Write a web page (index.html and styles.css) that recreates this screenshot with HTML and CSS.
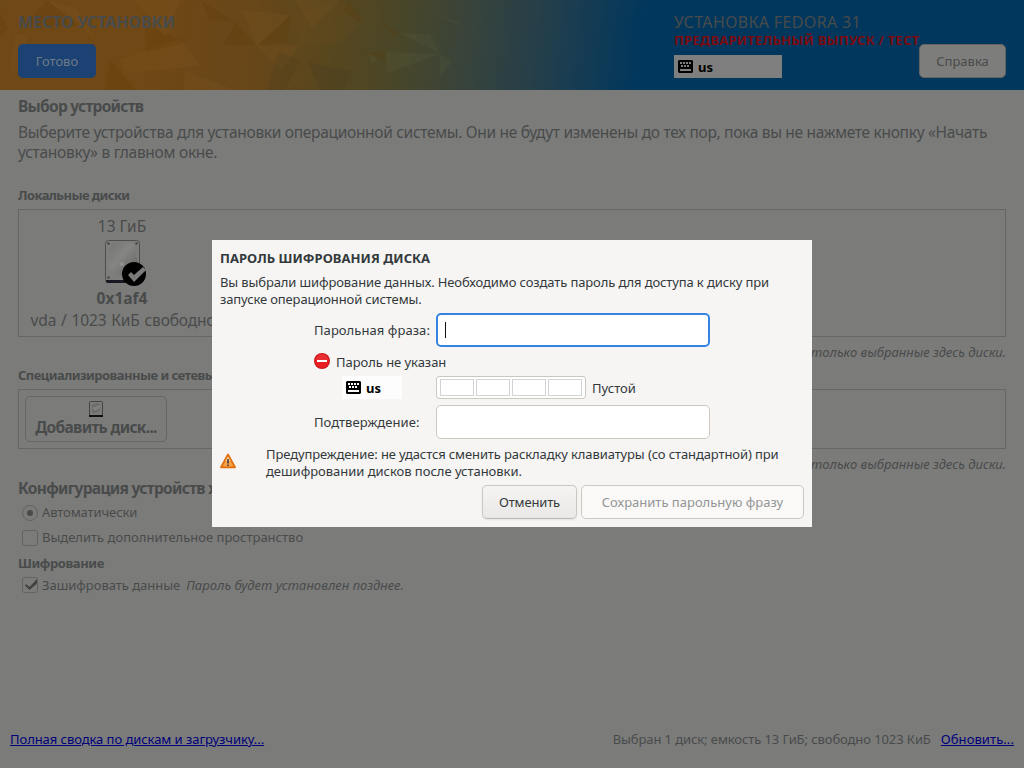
FILE: index.html
```html
<!DOCTYPE html>
<html lang="ru">
<head>
<meta charset="utf-8">
<title>Место установки</title>
<link rel="stylesheet" href="styles.css">
</head>
<body>
<svg width="0" height="0" class="defs">
  <symbol id="kbd" viewBox="0 0 15 13"><path fill="currentColor" fill-rule="evenodd" d="M1 0h13l1 1v11l-1 1H1l-1-1V1zM2 2v2h2V2zm3 0v2h2V2zm3 0v2h2V2zm3 0v2h2V2zM3 5v2h2V5zm3 0v2h2V5zm3 0v2h2V5zM2 9v2h11V9z"/></symbol>
</svg>
<div class="page">
  <header class="header">
    <svg class="header-art" width="680" height="90" viewBox="0 0 680 90">
      <g fill="#8a5f25" fill-opacity=".16">
        <path d="M242 10L291 15L257 46z"/><path d="M15 35L28 34L20 72L9 71z"/><path d="M47 0L77 8L96 40L80 25z"/>
        <path d="M185 71L235 90H184z"/><path d="M134 0H180L165 37z"/><path d="M120 60L180 38L200 66L125 73z"/><path d="M295 0H340L312 28z"/>
        <path d="M257 46L300 45L282 70z"/><path fill-opacity=".08" d="M291 15L345 0L362 22L340 44L300 45z"/>
      </g>
      <g fill="#5f6440" fill-opacity=".18">
        <path d="M400 33L430 34L440 54z"/><path d="M385 52L440 54L388 73z"/><path d="M429 10L470 28L452 22z"/><path d="M440 54L452 62L440 76z"/><path d="M368 52L378 60L372 64z"/>
      </g>
      <g fill="#5e3500" fill-opacity=".2">
        <path d="M0 14L8 29L0 37z"/><path d="M25 25L47 0L78 26z"/><path d="M257 46L291 15L287 41z"/><path d="M223 45L257 46L236 22z"/>
        <path d="M110 60L136 90H105z"/><path d="M145 26L188 42L147 52z"/><path d="M350 0L362 24L342 10z"/><path d="M380 20L400 34L393 36z"/><path d="M366 52L385 52L387 62z"/><path d="M200 0L236 22L210 20z"/>
      </g>
      <g fill="#3c3a20" fill-opacity=".16"><path d="M278 52L300 60L285 90H268z"/><path d="M308 62L352 72L345 90H320z"/></g>
    </svg>
    <div class="header-left">
      <h1 class="title bold t-title">МЕСТО УСТАНОВКИ</h1>
      <div class="btn-done"><span>Готово</span></div>
    </div>
    <div class="header-right">
      <div class="title"><span class="t-fedora">УСТАНОВКА FEDORA 31</span></div>
      <div class="prerelease"><span class="t-pre">ПРЕДВАРИТЕЛЬНЫЙ ВЫПУСК / ТЕСТ</span></div>
      <div class="layout"><svg width="15" height="13"><use href="#kbd"/></svg><span>us</span></div>
    </div>
    <div class="btn-help"><span class="t-help">Справка</span></div>
  </header>
  <main class="main">
    <h2 class="big bold h-devices"><span class="t-devices">Выбор устройств</span></h2>
    <p class="big intro"><span class="t-intro1">Выберите устройства для установки операционной системы. Они не будут изменены до тех пор, пока вы не нажмете кнопку «Начать</span><br><span class="t-intro2">установку» в главном окне.</span></p>
    <h3 class="small bold h-local"><span class="t-local">Локальные диски</span></h3>
    <section class="box disks">
      <div class="disk">
        <div class="big"><span>13 ГиБ</span></div>
        <svg class="disk-icon" width="50" height="48" viewBox="0 0 50 48">
          <defs><linearGradient id="metal" x1="0" y1="0" x2="1" y2="1"><stop offset="0" stop-color="#747472"/><stop offset=".45" stop-color="#858583"/><stop offset="1" stop-color="#60605f"/></linearGradient></defs>
          <rect x="8.500" y="1.500" width="34" height="42" rx="3" fill="#7e7e7c" stroke="#4e4e4d"/>
          <path d="M9 41h33v1q0 2-2 2H11q-2 0-2-2z" fill="#181722"/>
          <path d="M15 4q10-3 21 0q0 5 4 7q-3 4 0 8q2 10-4 15l-9 3q-13-1-16-12q-1-6 2-10q-3-3 0-5z" fill="url(#metal)"/>
          <g fill="#444"><circle cx="11.500" cy="4.500" r="1.200"/><circle cx="39.500" cy="4.500" r="1.200"/><circle cx="11.500" cy="38.500" r="1.200"/></g>
          <circle cx="25" cy="25" r="2" fill="#929290"/>
          <circle cx="37" cy="35" r="12" fill="#000"/>
          <path d="M31 36l3-3 3 3 9-8 3 3-12 12z" fill="#7b7b7a"/>
        </svg>
        <div class="big bold disk-name"><span>0x1af4</span></div>
        <div class="big disk-free"><span class="t-free">vda / 1023 КиБ свободно</span></div>
      </div>
    </section>
    <p class="small note"><span>только выбранные здесь диски.</span></p>
    <h3 class="small bold h-special"><span class="t-special">Специализированные и сетевые диски</span></h3>
    <section class="box special">
      <div class="add-disk">
        <svg width="16" height="17" viewBox="0 0 16 17"><rect x="1.500" y=".5" width="13" height="15" rx="1" fill="#7a7a78" stroke="#454545"/><path d="M4 4q4-3 8-1v6q-4 5-8 2z" fill="#6c6c6a"/><path d="M4 7l8-3v3l-5 3z" fill="#807f7d"/><path d="M1 14h14v2H1z" fill="#111"/></svg>
        <span class="big bold t-add">Добавить диск...</span>
      </div>
    </section>
    <p class="small note"><span>только выбранные здесь диски.</span></p>
    <h2 class="big bold h-config"><span class="t-config">Конфигурация устройств хранения</span></h2>
    <div class="small option"><svg width="16" height="16"><circle cx="8" cy="8" r="7.500" fill="none" stroke="#646361"/><circle cx="8" cy="8" r="3" fill="#494b4b"/></svg><span class="t-auto">Автоматически</span></div>
    <div class="small option second"><svg width="16" height="16"><rect x=".5" y=".5" width="15" height="15" rx="2" fill="none" stroke="#646361"/></svg><span>Выделить дополнительное пространство</span></div>
    <h3 class="small bold h-crypt"><span class="t-crypt">Шифрование</span></h3>
    <div class="small option third"><svg width="16" height="16"><rect x=".5" y=".5" width="15" height="15" rx="2" fill="none" stroke="#646361"/><path d="M4 7l3.500 3L15 2v4.500L7.500 13 3 8.500z" fill="#3f4141"/></svg><span class="t-encrypt">Зашифровать данные</span><em class="t-later">Пароль будет установлен позднее.</em></div>
  </main>
  <footer class="footer small">
    <a class="link t-summary">Полная сводка по дискам и загрузчику...</a>
    <span class="status t-status">Выбран 1 диск; емкость 13 ГиБ; свободно 1023 КиБ</span>
    <a class="link t-refresh">Обновить...</a>
  </footer>
</div>
<div class="dialog small" role="dialog">
  <h2 class="small bold d-title"><span class="t-dtitle">ПАРОЛЬ ШИФРОВАНИЯ ДИСКА</span></h2>
  <p class="d-text"><span class="t-d1">Вы выбрали шифрование данных. Необходимо создать пароль для доступа к диску при</span><br><span class="t-d2">запуске операционной системы.</span></p>
  <div class="row first"><label class="t-phrase">Парольная фраза:</label><div class="input focused"><i class="caret"></i></div></div>
  <div class="row missing"><svg width="16" height="16"><circle cx="8" cy="8" r="8" fill="#c9151b"/><circle cx="8" cy="8" r="7" fill="#e71e22"/><path d="M2 7a6 6 0 0 1 12 0z" fill="#f0494b" fill-opacity=".4"/><rect x="3" y="7" width="10" height="2" fill="#fff"/></svg><span class="t-missing">Пароль не указан</span></div>
  <div class="row strength"><div class="layout dialog-layout"><svg width="15" height="13"><use href="#kbd"/></svg><span>us</span></div><div class="meter"><i></i><i></i><i></i><i></i></div><span class="t-empty">Пустой</span></div>
  <div class="row confirm"><label class="t-confirm">Подтверждение:</label><div class="input"></div></div>
  <div class="warning">
    <svg width="16" height="16" viewBox="0 0 16 16"><path d="M8 1.500L15 14.300H1z" fill="#f7a14a" stroke="#e0700c" stroke-width="1.800" stroke-linejoin="round"/><path d="M8 3.500L10.500 8H5.500z" fill="#fcd2a2"/><path d="M7.300 6h1.500v4.500H7.300zM7.300 11.500h1.500V13H7.300z" fill="#33333b"/></svg>
    <p><span class="t-w1">Предупреждение: не удастся сменить раскладку клавиатуры (со стандартной) при</span><br><span class="t-w2">дешифровании дисков после установки.</span></p>
  </div>
  <div class="actions"><div class="btn cancel"><span class="t-cancel">Отменить</span></div><div class="btn save"><span>Сохранить парольную фразу</span></div></div>
</div>
</body>
</html>
```

FILE: styles.css
```css
* { box-sizing: border-box; }
html, body { margin: 0; width: 1024px; height: 768px; overflow: hidden; }
body { font-family: "Noto Sans", "Open Sans", sans-serif; position: relative; color: #494b4b; }
h1, h2, h3, p { margin: 0; font-weight: 400; }
svg { display: block; flex: none; }
.defs { position: absolute; }
span, em, label, a { white-space: nowrap; }
.big { font-size: 15.5px; line-height: 20px; }
.small { font-size: 13px; line-height: 17px; }
.bold { font-weight: 700; }
.page { width: 1024px; height: 768px; background: #7b7b7a; display: flex; flex-direction: column; }

.header { position: relative; height: 90px; flex: none; display: flex; background: linear-gradient(97deg, #6f4817 0, #6f4815 150px, #694719 250px, #55461f 345px, #47462b 410px, #38433b 470px, #253f4a 540px, #123b55 595px, #01375c 640px); }
.header-art { position: absolute; left: 0; top: 0; }
.header-left { position: relative; padding: 12px 0 0 18px; width: 674px; }
.title { font-size: 16px; line-height: 20px; color: #494b4b; }
.title.bold { font-weight: 700; }
.btn-done { margin-top: 12px; width: 78px; height: 34px; border-radius: 5px; background: #1b4272; color: #6d7a88; display: flex; align-items: center; justify-content: center; font-size: 13px; }
.header-right { width: 245px; padding-top: 12px; }
.prerelease { font-size: 13px; line-height: 17px; font-weight: 700; color: #7c0b10; }
.layout { width: 108px; height: 23px; margin-top: 6px; background: #7f7f7f; color: #000; display: flex; align-items: center; gap: 5px; padding: 0 4px; font-size: 13px; font-weight: 700; }
.layout span { padding-top: 1px; }
.btn-help { width: 87px; height: 34px; margin-top: 44px; border: 1px solid #666462; border-radius: 5px; background: #7d7d7b; display: flex; align-items: center; justify-content: center; font-size: 13px; }

.main { padding: 6px 18px 0; flex: 1; }
.intro { margin-top: 6px; }
.h-local { margin-top: 25px; }
.box { border: 1px solid #666664; }
.disks { height: 128px; margin-top: 5px; padding: 6px 12px; }
.disk { width: 182px; display: flex; flex-direction: column; align-items: center; }
.disk-icon { margin: 3px 0 1px 0; }
.disk-name { height: 22px; }
.disk-free { padding-left: 2px; }
.note { text-align: right; font-style: italic; margin-top: 7px; }
.h-special { margin-top: 6px; }
.special { height: 60px; margin-top: 5px; padding: 6px; }
.add-disk { width: 142px; height: 46px; border: 1px solid #666664; border-radius: 5px; padding-top: 4px; display: flex; flex-direction: column; align-items: center; }
.add-disk .big { line-height: 18px; }
.h-config { margin-top: 5px; }
.option { display: flex; align-items: center; gap: 4px; padding-left: 4px; margin-top: 6px; }
.option em { margin-left: 2px; }
.second { margin-top: 8px; }
.h-crypt { margin-top: 9px; }
.third { margin-top: 5px; height: 17px; }
.third svg { margin-bottom: 2px; }
.footer { height: 37px; padding: 0 10px; display: flex; }
.link { color: #00007a; text-decoration: underline; }
.status { margin-left: auto; margin-right: 10px; }

.dialog { position: absolute; left: 212px; top: 240px; width: 600px; height: 287px; padding: 10px 8px 8px; background: #f6f5f4; color: #33393b; }
.d-text { margin-top: 7px; }
.row { display: flex; align-items: center; padding-left: 94px; }
.first { margin-top: 5px; }
.row label { width: 122px; }
.input { width: 274px; height: 34px; border: 1px solid #cdc7c2; border-radius: 5px; background: #fff; }
.focused { border: 2px solid #3584e4; padding: 7px; }
.caret { display: block; width: 1px; height: 16px; background: #111; }
.missing { gap: 6px; height: 17px; margin-top: 6px; }
.missing svg { margin-bottom: 1px; }
.missing span { padding-top: 1px; }
.strength { margin-top: 6px; padding-left: 122px; }
.dialog-layout { width: 60px; margin: 0 34px 0 0; background: #fdfdfd; }
.meter { display: flex; gap: 2px; width: 150px; height: 23px; padding: 2px 3px; border: 1px solid #cdc7c2; border-radius: 3px; background: #fff; margin-right: 6px; }
.meter i { width: 34px; height: 17px; border: 1px solid #d3d3d3; }
.t-empty { padding-top: 1px; }
.confirm { margin-top: 6px; }
.warning { display: flex; align-items: center; gap: 30px; margin-top: 7px; }
.warning svg { margin-bottom: 4px; }
.actions { display: flex; justify-content: flex-end; gap: 4px; margin-top: 5px; }
.btn { height: 34px; border: 1px solid #cdc7c2; border-radius: 5px; display: flex; align-items: center; justify-content: center; }
.cancel { width: 95px; background: linear-gradient(#f5f4f2, #eae8e6); border-bottom-color: #bfb8b1; box-shadow: 0 1px 2px rgba(0,0,0,.08); }
.save { width: 223px; background: #faf9f8; color: #929595; }

/* Tracking per label */
.t-title { letter-spacing: -.07px; }
.t-fedora { letter-spacing: .36px; }
.t-pre { letter-spacing: .25px; }
.t-devices { letter-spacing: -.72px; }
.t-intro1 { letter-spacing: -.305px; }
.t-intro2 { letter-spacing: -.27px; }
.t-local { letter-spacing: -.57px; }
.t-free { letter-spacing: -.15px; word-spacing: 1px; }
.t-special { letter-spacing: -.54px; }
.t-add { letter-spacing: -.67px; }
.t-config { letter-spacing: -.68px; }
.t-auto { letter-spacing: -.1px; }
.t-crypt { letter-spacing: -.4px; }
.t-encrypt { letter-spacing: -.03px; }
.t-later { letter-spacing: .04px; }
.t-summary { letter-spacing: -.06px; }
.t-status { letter-spacing: -.09px; }
.t-refresh { letter-spacing: .08px; }
.t-dtitle { letter-spacing: .04px; }
.t-d1 { letter-spacing: -.12px; }
.t-d2 { letter-spacing: -.13px; }
.t-phrase { letter-spacing: .06px; }
.t-missing { letter-spacing: -.05px; }
.t-confirm { letter-spacing: .06px; }
.t-w1 { letter-spacing: -.11px; }
.t-w2 { letter-spacing: -.03px; }
.t-cancel { letter-spacing: -.15px; }
```
